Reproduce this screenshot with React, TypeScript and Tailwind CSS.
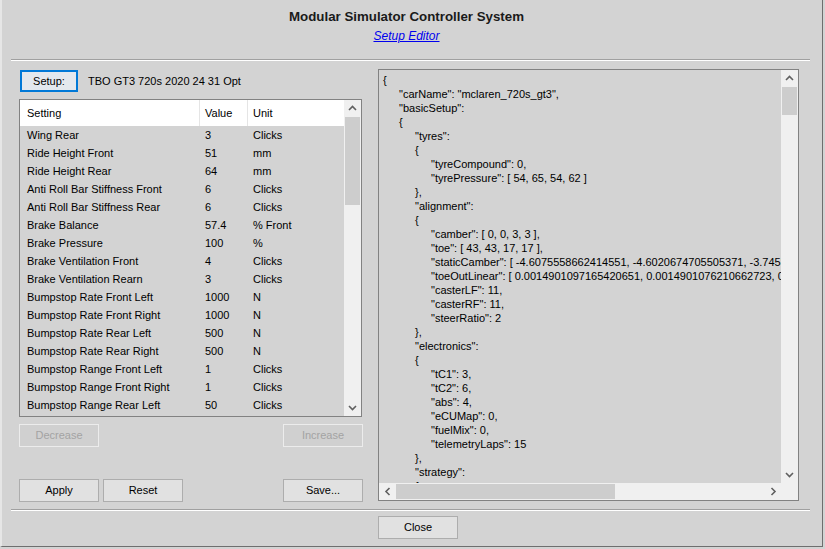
import React from "react";
import clsx from "clsx";

const rows = [
  ["Wing Rear", "3", "Clicks"],
  ["Ride Height Front", "51", "mm"],
  ["Ride Height Rear", "64", "mm"],
  ["Anti Roll Bar Stiffness Front", "6", "Clicks"],
  ["Anti Roll Bar Stiffness Rear", "6", "Clicks"],
  ["Brake Balance", "57.4", "% Front"],
  ["Brake Pressure", "100", "%"],
  ["Brake Ventilation Front", "4", "Clicks"],
  ["Brake Ventilation Rearn", "3", "Clicks"],
  ["Bumpstop Rate Front Left", "1000", "N"],
  ["Bumpstop Rate Front Right", "1000", "N"],
  ["Bumpstop Rate Rear Left", "500", "N"],
  ["Bumpstop Rate Rear Right", "500", "N"],
  ["Bumpstop Range Front Left", "1", "Clicks"],
  ["Bumpstop Range Front Right", "1", "Clicks"],
  ["Bumpstop Range Rear Left", "50", "Clicks"],
];

const json: [number, string][] = [
  [0, "{"],
  [1, '"carName": "mclaren_720s_gt3",'],
  [1, '"basicSetup":'],
  [1, "{"],
  [2, '"tyres":'],
  [2, "{"],
  [3, '"tyreCompound": 0,'],
  [3, '"tyrePressure": [ 54, 65, 54, 62 ]'],
  [2, "},"],
  [2, '"alignment":'],
  [2, "{"],
  [3, '"camber": [ 0, 0, 3, 3 ],'],
  [3, '"toe": [ 43, 43, 17, 17 ],'],
  [3, '"staticCamber": [ -4.6075558662414551, -4.6020674705505371, -3.7458438873291016, -3.7458438873291016 ],'],
  [3, '"toeOutLinear": [ 0.0014901097165420651, 0.0014901076210662723, 0.0014901097165420651 ],'],
  [3, '"casterLF": 11,'],
  [3, '"casterRF": 11,'],
  [3, '"steerRatio": 2'],
  [2, "},"],
  [2, '"electronics":'],
  [2, "{"],
  [3, '"tC1": 3,'],
  [3, '"tC2": 6,'],
  [3, '"abs": 4,'],
  [3, '"eCUMap": 0,'],
  [3, '"fuelMix": 0,'],
  [3, '"telemetryLaps": 15'],
  [2, "},"],
  [2, '"strategy":'],
  [2, "{"],
];

const indent = ["pl-[4px]", "pl-[20px]", "pl-[36px]", "pl-[52px]"];

// small scrollbar chevron
const Chevron = ({ dir }: { dir: "up" | "down" | "left" | "right" }) => {
  const pts = {
    up: "1,5 4.5,1.5 8,5",
    down: "1,2 4.5,5.5 8,2",
    left: "5.5,1 2,4.5 5.5,8",
    right: "2.5,1 6,4.5 2.5,8",
  }[dir];
  const vertical = dir === "up" || dir === "down";
  return (
    <svg width={vertical ? 9 : 8} height={vertical ? 7 : 9} viewBox={vertical ? "0 0 9 7" : "0 0 8 9"}>
      <polyline points={pts} fill="none" stroke="#606060" strokeWidth="1.6" />
    </svg>
  );
};

const Separator = ({ className }: { className?: string }) => (
  <div className={clsx("flex flex-col", className)}>
    <div className="h-px bg-[#a0a0a0]" />
    <div className="h-px bg-white" />
  </div>
);

const Btn = ({
  children,
  disabled,
  className,
}: {
  children: React.ReactNode;
  disabled?: boolean;
  className?: string;
}) => (
  <div
    className={clsx(
      "flex h-[23px] w-[80px] items-center justify-center border",
      disabled
        ? "border-[#ececec] bg-[#d0d0d0] text-[#a3a3a3]"
        : "border-[#adadad] bg-[#e1e1e1] text-black",
      className
    )}
  >
    {children}
  </div>
);

const App = () => {
  return (
    <div className="h-[549px] w-[825px] overflow-hidden bg-[#d3d3d3] font-['Liberation_Sans',Arial,sans-serif] text-[11px] text-black">
      <div className="flex h-[547px] w-[823px] flex-col border-r border-b border-l-2 border-r-[#6e6e6e] border-b-[#6e6e6e] border-l-[#e6e6e6]">
        <div className="pt-[9px] pr-[11px] text-center">
          <div className="text-[13.3px] leading-[16px] font-bold text-[#1a1a1a]">
            Modular Simulator Controller System
          </div>
          <div className="mt-[4px] text-[12px] leading-[14px] text-[#0000ee] italic underline">Setup Editor</div>
        </div>

        <Separator className="mt-[16px] ml-[9px] w-[799px]" />

        <div className="mt-[8px] flex gap-[15px] pl-[17px]">
          {/* left column */}
          <div className="flex w-[344px] flex-col">
            <div className="mt-px flex h-[22px] items-center">
              <div className="ml-px flex h-[22px] w-[58px] items-center justify-center border-2 border-[#0078d7] bg-[#e3e8ee]">
                Setup:
              </div>
              <span className="ml-[10px]">TBO GT3 720s 2020 24 31 Opt</span>
            </div>

            <div className="mt-[7px] flex h-[318px] w-[343px] border border-[#828282]">
              <div className="flex flex-1 flex-col">
                <div className="flex h-[26px] items-center bg-white">
                  <div className="w-[179px] pl-[7px]">Setting</div>
                  <div className="flex h-full w-[48px] items-center border-l border-[#e5e5e5] pl-[5px]">Value</div>
                  <div className="flex h-full flex-1 items-center border-l border-[#e5e5e5] pl-[5px]">Unit</div>
                </div>
                {rows.map((r, i) => (
                  <div key={i} className="flex h-[18px] items-center">
                    <div className="w-[179px] pl-[7px]">{r[0]}</div>
                    <div className="w-[48px] pl-[6px]">{r[1]}</div>
                    <div className="flex-1 pl-[6px]">{r[2]}</div>
                  </div>
                ))}
              </div>
              <div className="flex w-[17px] flex-col bg-[#f0f0f0]">
                <div className="flex h-[17px] items-center justify-center">
                  <Chevron dir="up" />
                </div>
                <div className="mx-px h-[88px] bg-[#cdcdcd]" />
                <div className="flex-1" />
                <div className="flex h-[17px] items-center justify-center">
                  <Chevron dir="down" />
                </div>
              </div>
            </div>

            <div className="mt-[7px] flex justify-between">
              <Btn disabled>Decrease</Btn>
              <Btn disabled>Increase</Btn>
            </div>

            <div className="mt-[32px] flex">
              <Btn>Apply</Btn>
              <Btn className="ml-[4px]">Reset</Btn>
              <Btn className="ml-auto">Save...</Btn>
            </div>
          </div>

          {/* json panel */}
          <div className="flex h-[432px] w-[421px] border border-[#828282]">
            <div className="flex min-w-0 flex-1 flex-col">
              <div className="flex-1 overflow-hidden pt-[3px]">
                {json.map(([lvl, text], i) => (
                  <div key={i} className={clsx("h-[14px] leading-[14px] whitespace-nowrap", indent[lvl])}>
                    {text}
                  </div>
                ))}
              </div>
              <div className="flex h-[17px] items-center bg-[#f0f0f0]">
                <div className="flex h-full w-[17px] items-center justify-center">
                  <Chevron dir="left" />
                </div>
                <div className="my-px h-[15px] w-[219px] bg-[#cdcdcd]" />
                <div className="flex-1" />
                <div className="flex h-full w-[17px] items-center justify-center">
                  <Chevron dir="right" />
                </div>
              </div>
            </div>
            <div className="flex w-[17px] flex-col bg-[#f0f0f0]">
              <div className="flex h-[17px] items-center justify-center">
                <Chevron dir="up" />
              </div>
              <div className="mx-px h-[28px] bg-[#cdcdcd]" />
              <div className="flex-1" />
              <div className="flex h-[17px] items-center justify-center">
                <Chevron dir="down" />
              </div>
              <div className="h-[17px]" />
            </div>
          </div>
        </div>

        <Separator className="mt-[7px] ml-[9px] w-[799px]" />

        <div className="mt-[5px] pl-[376px]">
          <Btn className="w-[79px]">Close</Btn>
        </div>
      </div>
    </div>
  );
};

export default App;
